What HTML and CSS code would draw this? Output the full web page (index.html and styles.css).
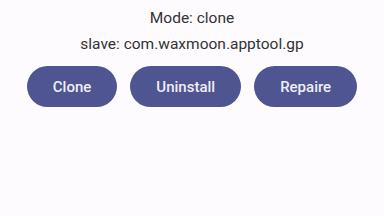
FILE: index.html
```html
<!DOCTYPE html>
<html>
    <head>
        <title>Mode</title>
        <link rel="stylesheet" href="styles.css">
    </head>
    <body>
        <div class="main-div">
            <div class="info-text">Mode: clone</div>
            <div class="info-text">slave: com.waxmoon.apptool.gp</div>
            <div class="buttons-div">
                <div class="action-btn">Clone</div>
                <div class="action-btn">Uninstall</div>
                <div class="action-btn">Repaire</div>
            </div>
        </div>
    </body>
</html>
```

FILE: styles.css
```css
body {
    margin: 0;
    background-color: #fdfbfe;
    font-family: Roboto, "Liberation Sans", sans-serif;
}
.main-div {
    display: flex;
    flex-direction: column;
    align-items: center;
    padding-top: 5px;
}
.info-text {
    font-size: 15.5px;
    color: #333333;
    line-height: 26px;
}
.buttons-div {
    display: flex;
    gap: 13px;
    margin-top: 9px;
}
.action-btn {
    height: 41px;
    padding: 0 26px;
    border-radius: 21px;
    background-color: #4e5590;
    color: #eeeef6;
    font-size: 15px;
    font-weight: 500;
    display: flex;
    align-items: center;
    justify-content: center;
}
```
